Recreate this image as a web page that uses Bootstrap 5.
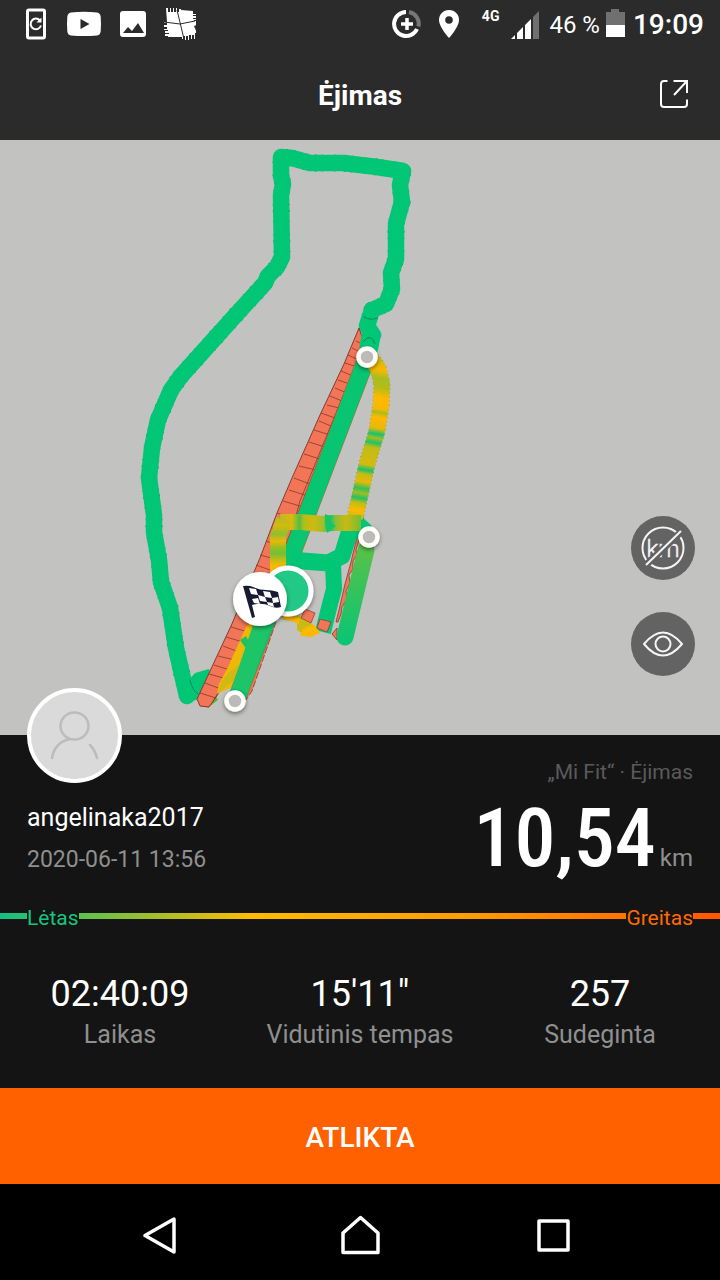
<!DOCTYPE html>
<html lang="lt">
<head>
<meta charset="utf-8">
<meta name="viewport" content="width=device-width, initial-scale=1">
<title>Ėjimas</title>
<link rel="stylesheet" href="https://cdn.jsdelivr.net/npm/bootstrap@5.3.0/dist/css/bootstrap.min.css">
<style>
  body { font-family: Roboto, "Liberation Sans", sans-serif; background: #141414; color: #fff; font-size: 25px; line-height: 32px; }
  svg { display: block; flex: none; }
  .status-bar, .title-bar { background: #2b2b2b; }
  .status-bar { height: 48px; padding: 2px 16px 0 24px; }
  .left-icons { gap: 18px; }
  .net { font-size: 14px; line-height: 16px; height: 34px; font-weight: 700; margin: 0 12px 0 22px; }
  .battery-text { font-size: 24px; margin: 0 5px 0 10px; }
  .clock { font-size: 28px; font-weight: 500; margin-left: 8px; }
  .title-bar { height: 92px; padding: 0 30px; }
  .title-bar h1 { font-size: 28px; font-weight: 700; padding-top: 4px; }
  .side { width: 32px; }
  .plain-btn { background: none; border: 0; padding: 0; color: inherit; }
  .map-area { background: #c2c2c1; min-height: 300px; flex: 1 1 0; }
  .map-area > svg { width: 100%; height: 100%; position: absolute; inset: 0; }
  .map-tools { position: absolute; right: 25px; bottom: 59px; gap: 32px; }
  .tool-btn { width: 64px; height: 64px; background: #636363; border: 0; border-radius: 50%; padding: 0; }
  .summary { padding: 0 27px; }
  .avatar { width: 95px; height: 95px; margin-top: -47px; background: #dadada; border: 4px solid #fff; border-radius: 50%; position: relative; }
  .user-name { margin-top: 19px; }
  .run-date { margin-top: 10px; color: #8f8f8f; font-size: 23px; }
  .source { margin-top: 21px; font-size: 21px; color: #5a5a5a; }
  .distance { font-family: "Roboto Condensed", "Liberation Sans Narrow", Roboto, sans-serif; font-size: 82px; line-height: 100px; font-weight: 500; }
  .unit { color: #8f8f8f; margin-left: 4px; font-size: 24px; }
  .pace-scale { margin-top: 12px; padding: 2px 27px 0; font-size: 21px; line-height: 32px;
    background: linear-gradient(90deg, #12c181, #63c04b 12%, #ffbc00 35%, #ff9c00 65%, #ff6a00 92%, #ff5500) center 13px / 100% 6px no-repeat; }
  .pace-scale span { background: #141414; }
  .slow { color: #16c480; }
  .fast { color: #ff6a00; }
  .stats { padding: 38px 0 34px; }
  .figure-num { font-size: 36px; line-height: 44px; }
  .figure-name { color: #8f8f8f; line-height: 38px; }
  .done-btn { background: #ff6100; height: 96px; border: 0; border-radius: 0; padding-top: 4px; color: #fff; font-size: 28px; font-weight: 500; }
  .nav-keys { background: #000; height: 96px; padding: 6px 64px 0; }
</style>
</head>
<body>
<div class="d-flex flex-column min-vh-100">
  <div class="status-bar d-flex justify-content-between align-items-center">
    <div class="left-icons d-flex align-items-center">
      <svg width="24" height="34" viewBox="0 0 24 34"><rect x="3.500" y="2" width="17" height="28" rx="1.500" fill="none" stroke="#fff" stroke-width="3"/><path d="M16 12.500A5.300 5.300 0 1 0 17 17.500" fill="none" stroke="#fff" stroke-width="2"/><path d="M12.500 14.500h5v-5z" fill="#fff"/></svg>
      <svg width="36" height="34" viewBox="0 0 36 34"><path d="M5 4.500Q18 3 31 4.500Q34.500 5 34.700 9Q35.300 16 34.700 23Q34.500 27 31 27.500Q18 28.500 5 27.500Q1.500 27 1.300 23Q.7 16 1.300 9Q1.500 5 5 4.500z" fill="#fff"/><path d="M14.500 11v10l9-5z" fill="#2b2b2b"/></svg>
      <svg width="26" height="34" viewBox="1 0 26 34"><rect x="1" y="3" width="26" height="26" rx="3" fill="#fff"/><path d="M4 25l5-6 4 4 6-8 6 10z" fill="#2b2b2b"/></svg>
      <svg width="32" height="34" viewBox="0 0 32 34"><path d="M2 0h2v4h2V0h1v4h2V0h1v4h2V0h1v4h2V1h2v1l12 1v3h4v1h-4v1h5v2h-5v1h5v1h-4v1h5v4h-2l-3 1 3 7h-2v6h-1v-4h-2v4h-1v-4h-2v5h-1v-4h-2v4h-1v-4h-2v3h-1v-2H4v-1H1v-2h4v-1H1v-2h3v-1H0v-1h3v-2H0v-2h3v-2H0v-1h3z" fill="#fff"/><path d="M13 2l7 29M0 14l16 2 15-3" fill="none" stroke="#2b2b2b"/></svg>
    </div>
    <div class="d-flex align-items-center">
      <svg width="30" height="34" viewBox="0 0 30 34"><g fill="none" stroke-width="4"><path d="M14 4A12 12 0 1 0 25 21" stroke="#fff"/><path d="M17 4A12 12 0 0 1 26.500 18.500" stroke="#777"/></g><path d="M15 10v12M9 16h12" stroke="#fff" stroke-width="3.500"/></svg>
      <svg width="22" height="34" viewBox="0 0 22 34" class="ms-3"><path d="M11 2C5 2 1 6.500 1 12c0 7 10 18 10 18s10-11 10-18C21 6.500 17 2 11 2z" fill="#fff"/><circle cx="11" cy="12" r="3.800" fill="#2b2b2b"/></svg>
      <span class="net">4G</span>
      <svg width="28" height="34" viewBox="0 0 28 34"><path d="M22 9l6-6v28h-6z" fill="#707070"/><path d="M0 31l4-4v4zM6 25l6-6v12H6zM14 17l6-6v20h-6z" fill="#fff"/></svg>
      <span class="battery-text">46 %</span>
      <svg width="20" height="34" viewBox="0 0 20 34"><path d="M1 4h5V1h8v3h6v14H1z" fill="#707070"/><path d="M1 17h19v12H1z" fill="#fff"/></svg>
      <span class="clock">19:09</span>
    </div>
  </div>

  <header class="title-bar d-flex justify-content-between align-items-center">
    <div class="side"></div>
    <h1 class="m-0">Ėjimas</h1>
    <button class="plain-btn side" aria-label="Dalintis">
      <svg width="32" height="32" viewBox="0 0 32 32" fill="none" stroke="#fff" stroke-width="2"><path d="M9.500 3H6a3 3 0 0 0-3 3v20a3 3 0 0 0 3 3h20a3 3 0 0 0 3-3v-4.500M15.500 3H29v12M29 3L16 17"/></svg>
    </button>
  </header>

  <main class="map-area position-relative">
    <svg viewBox="0 140 720 595" preserveAspectRatio="xMidYMid slice" role="img" aria-label="Maršrutas">
      <defs>
        <linearGradient id="mixDown" gradientUnits="userSpaceOnUse" x1="382" y1="360" x2="354" y2="520">
          <stop offset="0" stop-color="#d0b910"/><stop offset=".06" stop-color="#fdb800"/><stop offset=".11" stop-color="#a8bd20"/><stop offset=".17" stop-color="#b5bc18"/><stop offset=".23" stop-color="#ffb900"/><stop offset=".30" stop-color="#f5b900"/><stop offset=".32" stop-color="#a8bd20"/><stop offset=".35" stop-color="#ffb900"/><stop offset=".42" stop-color="#e5b908"/><stop offset=".455" stop-color="#16c46b"/><stop offset=".48" stop-color="#a5bd20"/><stop offset=".51" stop-color="#20c368"/><stop offset=".54" stop-color="#c2bc15"/><stop offset=".65" stop-color="#d5ba10"/><stop offset=".685" stop-color="#16c46b"/><stop offset=".71" stop-color="#c2bc15"/><stop offset=".76" stop-color="#e8b808"/><stop offset=".80" stop-color="#30c258"/><stop offset=".83" stop-color="#a0be20"/><stop offset=".86" stop-color="#20c368"/><stop offset=".89" stop-color="#c2bc15"/><stop offset=".94" stop-color="#ffb900"/><stop offset="1" stop-color="#b0bd18"/>
        </linearGradient>
        <linearGradient id="mixAcross" gradientUnits="userSpaceOnUse" x1="274" y1="0" x2="362" y2="0">
          <stop offset="0" stop-color="#a3bd28"/><stop offset=".2" stop-color="#dcb90d"/><stop offset=".29" stop-color="#50c044"/><stop offset=".34" stop-color="#b5bc19"/><stop offset=".45" stop-color="#d0b910"/><stop offset=".56" stop-color="#a0be28"/><stop offset=".64" stop-color="#16c46b"/><stop offset=".7" stop-color="#8bbf31"/><stop offset=".82" stop-color="#cab912"/><stop offset="1" stop-color="#70bf36"/>
        </linearGradient>
        <linearGradient id="mixLeft" gradientUnits="userSpaceOnUse" x1="0" y1="514" x2="0" y2="572">
          <stop offset="0" stop-color="#a3bd28"/><stop offset=".2" stop-color="#d3ba10"/><stop offset=".35" stop-color="#90bf2e"/><stop offset=".47" stop-color="#eab808"/><stop offset=".57" stop-color="#9dbe20"/><stop offset=".68" stop-color="#72bf38"/><stop offset=".78" stop-color="#bcbc18"/><stop offset=".9" stop-color="#ffb900"/>
        </linearGradient>
        <linearGradient id="eastLeg" gradientUnits="userSpaceOnUse" x1="0" y1="540" x2="0" y2="640">
          <stop offset="0" stop-color="#5fc145"/><stop offset="1" stop-color="#0bc572"/>
        </linearGradient>
        <filter id="drop" x="-30%" y="-30%" width="160%" height="170%"><feDropShadow dx="0" dy="2" stdDeviation="2" flood-opacity=".45"/></filter>
        <path id="loop" d="M367 343L373 335L367 326L372 310L386 304L392 289L391 273L396 259L396 224L402 202L400 185L403 171L377 167L343 163L310 163L292 158L281 157L281 176L283 184L281 195L282 257L277 267L268 276L265 283L234 317L181 376L171 390L158 420L152 448L149 478L154 515L154 532L159 560L161 582L170 608L173 628L176 648L181 670L187 696"/>
      </defs>

      <g fill="none" stroke-linejoin="round" stroke-linecap="round">
        <use href="#loop" stroke="#1a7f5a" stroke-width="17" stroke-linecap="butt" stroke-dasharray="1 5 2 9 1 12"/>
        <use href="#loop" stroke="#00c676" stroke-width="16.500"/>
        <path d="M186 683L195 673L209 669L214 684L204 696L187 704z" fill="#00c676"/>
        <path d="M190 680Q192 690 198 694M364 317q6 4 13 1" stroke="#078d56"/>
        <path d="M200 704l8 4 10-8-4-8z" fill="#4bc145"/>
        <path d="M204 703l3 5 4-3z" fill="#e8b808"/>
      </g>

      <!-- fast leg, divided at each sample -->
      <g stroke="#873a2c" stroke-linejoin="round">
        <path d="M359 328L364 343L300 508L276 570L250 632L234 670L216 697L209 707L200 706L197 699L231 626L260 558L277 513L292 478L320 415L344 364z" fill="#f27558"/>
        <path d="M356 341l8 4M352 348l10 5M348 355l11 5M345 363l12 4M341 371l12 5M338 380l12 4M335 388l12 5M330 396l12 5M327 405l12 3M321 413l14 5M319 421l12 5M314 430l16 5M309 442l16 5M304 454l16 5M299 466l17 4M294 478l16 6M289 490l16 5M283 501l17 5M277 513l16 5M272 528l15 5M266 541l14 5M260 555l15 4M256 565l14 5M231 627l17 5M226 637l17 5M223 646l16 6M218 656l17 4M214 665l16 5M209 674l18 5M205 683l16 6M200 693l16 5M365 342L300 501L290 537L247 628L229 672L213 702" fill="none" stroke-width=".8"/>
        <path d="M275 612L246 690L246 700L252 691L276 622z" fill="#f27558" stroke-dasharray="7 2" stroke-width=".8"/>
        <path d="M357 537l2 3-3 10 1 5-4 6v8l-4 6 1 8-4 8 1 8-5 8-1 7-3 8h-2l3-12 6-26 6-22zM337 628l-5 6 5 6z" fill="#f27558" stroke-width=".8"/>
      </g>

      <g fill="none" stroke-linejoin="round">
        <path d="M246 627L262 610L252 672L242 690L234 686L217 694L219 684L228 667z" fill="#f0b806"/>
        <path d="M229 672l10-7 3 17-9-1-15 12 3-10z" fill="#cfb914"/>
        <path d="M240 640l6-4 4 8-3 6z" fill="#20bf64"/>
        <path d="M367 357L237 698" stroke="#a76a22" stroke-width="18"/>
        <path d="M367 357L237 698" stroke="#08c572" stroke-width="17"/>
        <path d="M263 622L240 690" stroke="#1dc568" stroke-width="17"/>
        <path d="M371 336L369 347" stroke="#00c676" stroke-width="19" stroke-linecap="round"/>
        <path d="M363 342q8-10 12 2" stroke="#078d56"/>
        <path d="M292 560L303 561L328 563L342 556L351 527L365 525" stroke="#00c676" stroke-width="17"/>
        <path d="M333 563L334 589L330 604L323 632" stroke="#00c676" stroke-width="16"/>
        <path d="M352 520L362 517L372 526L360 538L346 545z" fill="#00c676"/>
        <path d="M280 608L298 615L310 622L320 633L308 637L297 630L297 621L283 620z" fill="#cbb914"/>
        <path d="M286 614l14 4-1 6-16-6zM303 629l10-5 7 8-8 5-12-1z" fill="#fcb900"/>
        <path d="M371 359L378 368L382 384L381 405L377 431L367 464L361 491L355 518" stroke="#6d8c32" stroke-width="17" stroke-dasharray="1 3"/>
        <path d="M371 359L378 368L382 384L381 405L377 431L367 464L361 491L355 518" stroke="url(#mixDown)" stroke-width="16"/>
        <path d="M361 523L332 523L323 524L300 522L280 522" stroke="url(#mixAcross)" stroke-width="16"/>
        <path d="M284 520L278 537L278 574" stroke="url(#mixLeft)" stroke-width="16"/>
        <path d="M325 514l7 3-2 4 6 5-9 7-2-8z" fill="#17c469"/>
        <path d="M366 550L345 637" stroke="url(#eastLeg)" stroke-width="17" stroke-linecap="round"/>
      </g>
      <g fill="#f27558" stroke="#873a2c" stroke-width=".7">
        <path d="M305 609l10 4-4 10-10-5zM320 619l11 3-4 10-10-4z"/>
      </g>

      <g fill="#bdbbb9" stroke="#fffef9" stroke-width="4.500" filter="url(#drop)">
        <circle cx="367" cy="357" r="8.500"/><circle cx="369" cy="537" r="8.500"/><circle cx="235" cy="701" r="8.500"/>
      </g>
      <circle cx="288" cy="591" r="23" fill="#22c885" stroke="#fff" stroke-width="5" filter="url(#drop)"/>
      <circle cx="260" cy="599" r="27" fill="#fff" filter="url(#drop)"/>
      <g>
        <path d="M243 586q6-1 10 1q7 3 13 3q6 0 12 2l3 15q-5 2-11-1q-8-4-18-1l3 12-3 1z" fill="#171a32"/>
        <path d="M249 588l7 1 2 6-7-1zM263 591l7 1 2 6-7-1zM258 595l7 2 2 5-7-1zM272 598l6-1 1 5-6 1zM252 599l6-1 2 6-6-1zM267 602l6 1 1 4-6-2z" fill="#fff"/>
      </g>
    </svg>

    <div class="map-tools d-flex flex-column">
      <button class="tool-btn" aria-label="Kilometrų žymos">
        <svg width="64" height="64" viewBox="0 0 64 64" fill="none" stroke="#f5f5f5" stroke-width="2"><circle cx="32" cy="32" r="20.500"/><text x="32" y="41" text-anchor="middle" font-family="Roboto, sans-serif" font-size="24" font-weight="300" fill="#f5f5f5" stroke="#f5f5f5" stroke-width=".5">km</text><path d="M16 48L51 15" stroke="#636363" stroke-width="7"/><path d="M15 49L50 15"/></svg>
      </button>
      <button class="tool-btn" aria-label="Rodyti žemėlapį">
        <svg width="64" height="64" viewBox="0 0 64 64" fill="none" stroke="#f5f5f5" stroke-width="2"><path d="M13 32Q32 9 51 32Q32 55 13 32z" stroke-linejoin="round"/><circle cx="32" cy="32" r="7.500"/></svg>
      </button>
    </div>
  </main>

  <section class="summary d-flex justify-content-between">
    <div>
      <div class="avatar">
        <svg width="87" height="87" viewBox="0 0 87 87" fill="none" stroke="#bcbcbc" stroke-width="2.500" stroke-linecap="round"><ellipse cx="43.500" cy="34" rx="14" ry="13.500"/><path d="M39 47Q24 50 21 66M59 53Q64 58 66 66"/></svg>
      </div>
      <div class="user-name">angelinaka2017</div>
      <div class="run-date">2020-06-11 13:56</div>
    </div>
    <div class="text-end">
      <div class="source">„Mi Fit“ · Ėjimas</div>
      <div class="d-flex align-items-baseline justify-content-end"><span class="distance">10,54</span><span class="unit">km</span></div>
    </div>
  </section>

  <div class="pace-scale d-flex justify-content-between">
    <span class="slow">Lėtas</span><span class="fast">Greitas</span>
  </div>

  <section class="stats row g-0 text-center">
    <div class="col-4"><div class="figure-num">02:40:09</div><div class="figure-name">Laikas</div></div>
    <div class="col-4"><div class="figure-num">15'11"</div><div class="figure-name">Vidutinis tempas</div></div>
    <div class="col-4"><div class="figure-num">257</div><div class="figure-name">Sudeginta</div></div>
  </section>

  <button class="done-btn w-100">ATLIKTA</button>

  <nav class="nav-keys d-flex justify-content-around align-items-center" aria-label="Sistemos mygtukai">
    <button class="plain-btn" aria-label="Atgal"><svg width="40" height="40" viewBox="0 0 40 40" fill="none" stroke="#fff" stroke-width="3.500" stroke-linejoin="round"><path d="M31 4v33L2 20.500z"/></svg></button>
    <button class="plain-btn" aria-label="Pradžia"><svg width="40" height="40" viewBox="0 0 40 40" fill="none" stroke="#fff" stroke-width="3.500" stroke-linejoin="round"><path d="M20.500 2.500L38 18v19.500H3V18z"/></svg></button>
    <button class="plain-btn" aria-label="Naujausi"><svg width="40" height="40" viewBox="0 0 40 40" fill="none" stroke="#fff" stroke-width="3.500" stroke-linejoin="round"><path d="M2 6h29v29H2z"/></svg></button>
  </nav>
</div>
<script src="https://cdn.jsdelivr.net/npm/bootstrap@5.3.0/dist/js/bootstrap.bundle.min.js"></script>
</body>
</html>
